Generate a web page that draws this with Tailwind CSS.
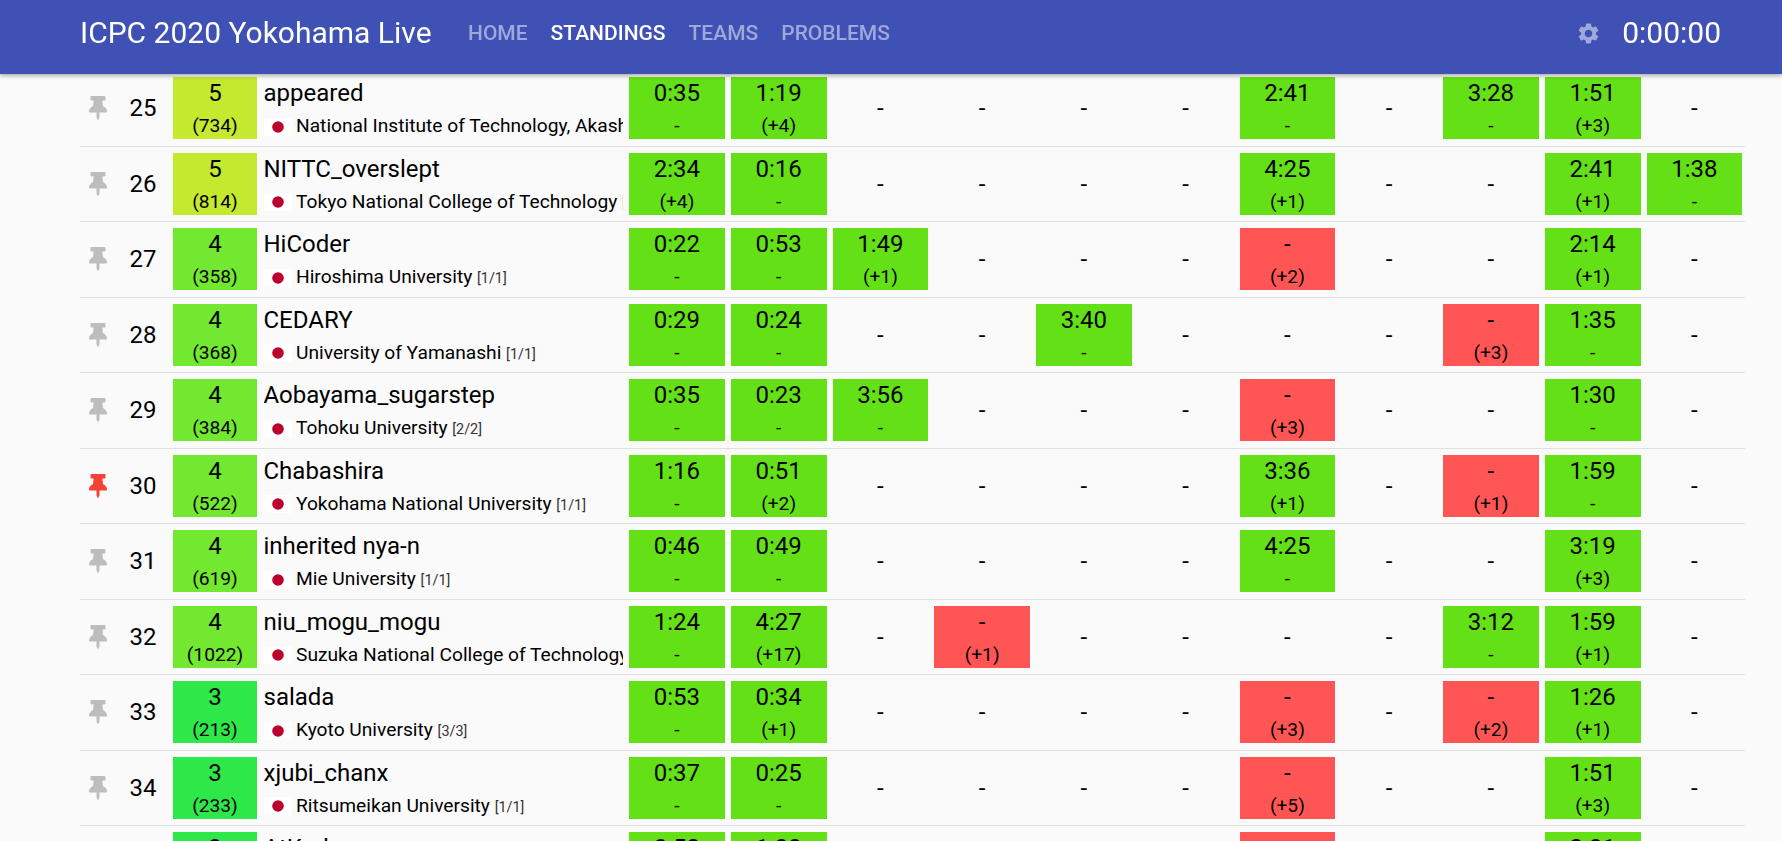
<!DOCTYPE html>
<html lang="en">
<head>
<meta charset="utf-8">
<title>ICPC 2020 Yokohama Live</title>
<script src="https://cdn.jsdelivr.net/npm/@tailwindcss/browser@4"></script>
</head>
<body class="h-[841px] overflow-hidden bg-[#fafafa] text-black font-['Roboto',sans-serif]">
<header class="fixed top-0 inset-x-0 z-10 h-[74px] bg-[#3f51b5] shadow-[0_2px_4px_rgba(0,0,0,0.3)] flex items-start pt-[15px] pl-[80px] pr-[61px] text-white">
  <div class="text-[30px] leading-[36px] w-[388px]">ICPC 2020 Yokohama Live</div>
  <nav class="flex gap-[23px] text-[21px] leading-[36px] font-medium text-[#9fa8da]">
    <a>HOME</a><a class="text-white">STANDINGS</a><a>TEAMS</a><a>PROBLEMS</a>
  </nav>
  <div class="ml-auto flex items-center gap-[21px]">
    <svg class="w-[25px] h-[25px] text-[#9fa8da]" viewBox="0 0 24 24" fill="currentColor"><path d="M19.14 12.94c.04-.3.06-.61.06-.94 0-.32-.02-.64-.07-.94l2.03-1.58a.49.49 0 0 0 .12-.61l-1.92-3.32a.488.488 0 0 0-.59-.22l-2.39.96c-.5-.38-1.03-.7-1.62-.94l-.36-2.54a.484.484 0 0 0-.48-.41h-3.84c-.24 0-.43.17-.47.41l-.36 2.54c-.59.24-1.13.57-1.62.94l-2.39-.96c-.22-.08-.47 0-.59.22L2.74 8.87c-.12.21-.08.47.12.61l2.03 1.58c-.05.3-.09.63-.09.94s.02.64.07.94l-2.03 1.58a.49.49 0 0 0-.12.61l1.92 3.32c.12.22.37.29.59.22l2.39-.96c.5.38 1.03.7 1.62.94l.36 2.54c.05.24.24.41.48.41h3.84c.24 0 .44-.17.47-.41l.36-2.54c.59-.24 1.13-.56 1.62-.94l2.39.96c.22.08.47 0 .59-.22l1.92-3.32c.12-.22.07-.47-.12-.61l-2.01-1.58zM12 15.6c-1.98 0-3.6-1.62-3.6-3.6s1.62-3.6 3.6-3.6 3.6 1.62 3.6 3.6-1.62 3.6-3.6 3.6z"/></svg>
    <div class="text-[30px] leading-[36px]">0:00:00</div>
  </div>
</header>

<main class="pt-[71px] pl-[80px]">

<section class="w-[1665px] h-[75.5px] border-b border-[#e0e0e0] grid grid-cols-[36px_54px_90px_366px_repeat(11,101.75px)] items-center text-center text-[24px]">
  <svg class="justify-self-center h-[24px] w-[18px] text-[#bdbdbd]" viewBox="0 0 384 512" fill="currentColor"><path d="M298.028 214.267L285.793 96H328c13.255 0 24-10.745 24-24V24c0-13.255-10.745-24-24-24H56C42.745 0 32 10.745 32 24v48c0 13.255 10.745 24 24 24h42.207L85.972 214.267C37.465 236.82 0 277.261 0 328c0 13.255 10.745 24 24 24h136v104.007c0 1.242.289 2.467.845 3.578l24 48c2.941 5.882 11.364 5.893 14.311 0l24-48a8.008 8.008 0 0 0 .845-3.578V352h136c13.255 0 24-10.745 24-24-.001-51.183-37.983-91.42-85.973-113.733z"/></svg>
  <div>25</div>
  <div class="mx-[3px] h-[62px] bg-[#c5e92f]"><p class="leading-[32px]">5</p><p class="text-[19.2px] leading-[34px]">(734)</p></div>
  <div class="ml-[3.5px] mr-[3px] text-left h-[62px] overflow-hidden whitespace-nowrap"><p class="leading-[32px]">appeared</p><div class="flex items-center h-[32px] mt-[1.5px] text-[19.2px] gap-[4.5px]"><svg class="w-[28px] h-[18px] shrink-0" viewBox="0 0 28 18"><rect width="28" height="18" fill="#fff"/><circle cx="14" cy="9" r="5.8" fill="#bc002d"/></svg><span>National Institute of Technology, Akashi College <span class="text-[14.4px] text-[#333]">[1/1]</span></span></div></div>
  <div class="mx-[3px] h-[62px] bg-[#64e016]"><p class="leading-[32px]">0:35</p><p class="text-[19.2px] leading-[34px]">-</p></div>
  <div class="mx-[3px] h-[62px] bg-[#64e016]"><p class="leading-[32px]">1:19</p><p class="text-[19.2px] leading-[34px]">(+4)</p></div>
  <div>-</div><div>-</div><div>-</div><div>-</div>
  <div class="mx-[3px] h-[62px] bg-[#64e016]"><p class="leading-[32px]">2:41</p><p class="text-[19.2px] leading-[34px]">-</p></div>
  <div>-</div>
  <div class="mx-[3px] h-[62px] bg-[#64e016]"><p class="leading-[32px]">3:28</p><p class="text-[19.2px] leading-[34px]">-</p></div>
  <div class="mx-[3px] h-[62px] bg-[#64e016]"><p class="leading-[32px]">1:51</p><p class="text-[19.2px] leading-[34px]">(+3)</p></div>
  <div>-</div>
</section>

<section class="w-[1665px] h-[75.5px] border-b border-[#e0e0e0] grid grid-cols-[36px_54px_90px_366px_repeat(11,101.75px)] items-center text-center text-[24px]">
  <svg class="justify-self-center h-[24px] w-[18px] text-[#bdbdbd]" viewBox="0 0 384 512" fill="currentColor"><path d="M298.028 214.267L285.793 96H328c13.255 0 24-10.745 24-24V24c0-13.255-10.745-24-24-24H56C42.745 0 32 10.745 32 24v48c0 13.255 10.745 24 24 24h42.207L85.972 214.267C37.465 236.82 0 277.261 0 328c0 13.255 10.745 24 24 24h136v104.007c0 1.242.289 2.467.845 3.578l24 48c2.941 5.882 11.364 5.893 14.311 0l24-48a8.008 8.008 0 0 0 .845-3.578V352h136c13.255 0 24-10.745 24-24-.001-51.183-37.983-91.42-85.973-113.733z"/></svg>
  <div>26</div>
  <div class="mx-[3px] h-[62px] bg-[#c5e92f]"><p class="leading-[32px]">5</p><p class="text-[19.2px] leading-[34px]">(814)</p></div>
  <div class="ml-[3.5px] mr-[3px] text-left h-[62px] overflow-hidden whitespace-nowrap"><p class="leading-[32px]">NITTC_overslept</p><div class="flex items-center h-[32px] mt-[1.5px] text-[19.2px] gap-[4.5px]"><svg class="w-[28px] h-[18px] shrink-0" viewBox="0 0 28 18"><rect width="28" height="18" fill="#fff"/><circle cx="14" cy="9" r="5.8" fill="#bc002d"/></svg><span>Tokyo National College of Technology <span class="text-[14.4px] text-[#333]">[1/1]</span></span></div></div>
  <div class="mx-[3px] h-[62px] bg-[#64e016]"><p class="leading-[32px]">2:34</p><p class="text-[19.2px] leading-[34px]">(+4)</p></div>
  <div class="mx-[3px] h-[62px] bg-[#64e016]"><p class="leading-[32px]">0:16</p><p class="text-[19.2px] leading-[34px]">-</p></div>
  <div>-</div><div>-</div><div>-</div><div>-</div>
  <div class="mx-[3px] h-[62px] bg-[#64e016]"><p class="leading-[32px]">4:25</p><p class="text-[19.2px] leading-[34px]">(+1)</p></div>
  <div>-</div><div>-</div>
  <div class="mx-[3px] h-[62px] bg-[#64e016]"><p class="leading-[32px]">2:41</p><p class="text-[19.2px] leading-[34px]">(+1)</p></div>
  <div class="mx-[3px] h-[62px] bg-[#64e016]"><p class="leading-[32px]">1:38</p><p class="text-[19.2px] leading-[34px]">-</p></div>
</section>

<section class="w-[1665px] h-[75.5px] border-b border-[#e0e0e0] grid grid-cols-[36px_54px_90px_366px_repeat(11,101.75px)] items-center text-center text-[24px]">
  <svg class="justify-self-center h-[24px] w-[18px] text-[#bdbdbd]" viewBox="0 0 384 512" fill="currentColor"><path d="M298.028 214.267L285.793 96H328c13.255 0 24-10.745 24-24V24c0-13.255-10.745-24-24-24H56C42.745 0 32 10.745 32 24v48c0 13.255 10.745 24 24 24h42.207L85.972 214.267C37.465 236.82 0 277.261 0 328c0 13.255 10.745 24 24 24h136v104.007c0 1.242.289 2.467.845 3.578l24 48c2.941 5.882 11.364 5.893 14.311 0l24-48a8.008 8.008 0 0 0 .845-3.578V352h136c13.255 0 24-10.745 24-24-.001-51.183-37.983-91.42-85.973-113.733z"/></svg>
  <div>27</div>
  <div class="mx-[3px] h-[62px] bg-[#72e830]"><p class="leading-[32px]">4</p><p class="text-[19.2px] leading-[34px]">(358)</p></div>
  <div class="ml-[3.5px] mr-[3px] text-left h-[62px] overflow-hidden whitespace-nowrap"><p class="leading-[32px]">HiCoder</p><div class="flex items-center h-[32px] mt-[1.5px] text-[19.2px] gap-[4.5px]"><svg class="w-[28px] h-[18px] shrink-0" viewBox="0 0 28 18"><rect width="28" height="18" fill="#fff"/><circle cx="14" cy="9" r="5.8" fill="#bc002d"/></svg><span>Hiroshima University <span class="text-[14.4px] text-[#333]">[1/1]</span></span></div></div>
  <div class="mx-[3px] h-[62px] bg-[#64e016]"><p class="leading-[32px]">0:22</p><p class="text-[19.2px] leading-[34px]">-</p></div>
  <div class="mx-[3px] h-[62px] bg-[#64e016]"><p class="leading-[32px]">0:53</p><p class="text-[19.2px] leading-[34px]">-</p></div>
  <div class="mx-[3px] h-[62px] bg-[#64e016]"><p class="leading-[32px]">1:49</p><p class="text-[19.2px] leading-[34px]">(+1)</p></div>
  <div>-</div><div>-</div><div>-</div>
  <div class="mx-[3px] h-[62px] bg-[#ff5555]"><p class="leading-[32px]">-</p><p class="text-[19.2px] leading-[34px]">(+2)</p></div>
  <div>-</div><div>-</div>
  <div class="mx-[3px] h-[62px] bg-[#64e016]"><p class="leading-[32px]">2:14</p><p class="text-[19.2px] leading-[34px]">(+1)</p></div>
  <div>-</div>
</section>

<section class="w-[1665px] h-[75.5px] border-b border-[#e0e0e0] grid grid-cols-[36px_54px_90px_366px_repeat(11,101.75px)] items-center text-center text-[24px]">
  <svg class="justify-self-center h-[24px] w-[18px] text-[#bdbdbd]" viewBox="0 0 384 512" fill="currentColor"><path d="M298.028 214.267L285.793 96H328c13.255 0 24-10.745 24-24V24c0-13.255-10.745-24-24-24H56C42.745 0 32 10.745 32 24v48c0 13.255 10.745 24 24 24h42.207L85.972 214.267C37.465 236.82 0 277.261 0 328c0 13.255 10.745 24 24 24h136v104.007c0 1.242.289 2.467.845 3.578l24 48c2.941 5.882 11.364 5.893 14.311 0l24-48a8.008 8.008 0 0 0 .845-3.578V352h136c13.255 0 24-10.745 24-24-.001-51.183-37.983-91.42-85.973-113.733z"/></svg>
  <div>28</div>
  <div class="mx-[3px] h-[62px] bg-[#72e830]"><p class="leading-[32px]">4</p><p class="text-[19.2px] leading-[34px]">(368)</p></div>
  <div class="ml-[3.5px] mr-[3px] text-left h-[62px] overflow-hidden whitespace-nowrap"><p class="leading-[32px]">CEDARY</p><div class="flex items-center h-[32px] mt-[1.5px] text-[19.2px] gap-[4.5px]"><svg class="w-[28px] h-[18px] shrink-0" viewBox="0 0 28 18"><rect width="28" height="18" fill="#fff"/><circle cx="14" cy="9" r="5.8" fill="#bc002d"/></svg><span>University of Yamanashi <span class="text-[14.4px] text-[#333]">[1/1]</span></span></div></div>
  <div class="mx-[3px] h-[62px] bg-[#64e016]"><p class="leading-[32px]">0:29</p><p class="text-[19.2px] leading-[34px]">-</p></div>
  <div class="mx-[3px] h-[62px] bg-[#64e016]"><p class="leading-[32px]">0:24</p><p class="text-[19.2px] leading-[34px]">-</p></div>
  <div>-</div><div>-</div>
  <div class="mx-[3px] h-[62px] bg-[#64e016]"><p class="leading-[32px]">3:40</p><p class="text-[19.2px] leading-[34px]">-</p></div>
  <div>-</div><div>-</div><div>-</div>
  <div class="mx-[3px] h-[62px] bg-[#ff5555]"><p class="leading-[32px]">-</p><p class="text-[19.2px] leading-[34px]">(+3)</p></div>
  <div class="mx-[3px] h-[62px] bg-[#64e016]"><p class="leading-[32px]">1:35</p><p class="text-[19.2px] leading-[34px]">-</p></div>
  <div>-</div>
</section>

<section class="w-[1665px] h-[75.5px] border-b border-[#e0e0e0] grid grid-cols-[36px_54px_90px_366px_repeat(11,101.75px)] items-center text-center text-[24px]">
  <svg class="justify-self-center h-[24px] w-[18px] text-[#bdbdbd]" viewBox="0 0 384 512" fill="currentColor"><path d="M298.028 214.267L285.793 96H328c13.255 0 24-10.745 24-24V24c0-13.255-10.745-24-24-24H56C42.745 0 32 10.745 32 24v48c0 13.255 10.745 24 24 24h42.207L85.972 214.267C37.465 236.82 0 277.261 0 328c0 13.255 10.745 24 24 24h136v104.007c0 1.242.289 2.467.845 3.578l24 48c2.941 5.882 11.364 5.893 14.311 0l24-48a8.008 8.008 0 0 0 .845-3.578V352h136c13.255 0 24-10.745 24-24-.001-51.183-37.983-91.42-85.973-113.733z"/></svg>
  <div>29</div>
  <div class="mx-[3px] h-[62px] bg-[#72e830]"><p class="leading-[32px]">4</p><p class="text-[19.2px] leading-[34px]">(384)</p></div>
  <div class="ml-[3.5px] mr-[3px] text-left h-[62px] overflow-hidden whitespace-nowrap"><p class="leading-[32px]">Aobayama_sugarstep</p><div class="flex items-center h-[32px] mt-[1.5px] text-[19.2px] gap-[4.5px]"><svg class="w-[28px] h-[18px] shrink-0" viewBox="0 0 28 18"><rect width="28" height="18" fill="#fff"/><circle cx="14" cy="9" r="5.8" fill="#bc002d"/></svg><span>Tohoku University <span class="text-[14.4px] text-[#333]">[2/2]</span></span></div></div>
  <div class="mx-[3px] h-[62px] bg-[#64e016]"><p class="leading-[32px]">0:35</p><p class="text-[19.2px] leading-[34px]">-</p></div>
  <div class="mx-[3px] h-[62px] bg-[#64e016]"><p class="leading-[32px]">0:23</p><p class="text-[19.2px] leading-[34px]">-</p></div>
  <div class="mx-[3px] h-[62px] bg-[#64e016]"><p class="leading-[32px]">3:56</p><p class="text-[19.2px] leading-[34px]">-</p></div>
  <div>-</div><div>-</div><div>-</div>
  <div class="mx-[3px] h-[62px] bg-[#ff5555]"><p class="leading-[32px]">-</p><p class="text-[19.2px] leading-[34px]">(+3)</p></div>
  <div>-</div><div>-</div>
  <div class="mx-[3px] h-[62px] bg-[#64e016]"><p class="leading-[32px]">1:30</p><p class="text-[19.2px] leading-[34px]">-</p></div>
  <div>-</div>
</section>

<section class="w-[1665px] h-[75.5px] border-b border-[#e0e0e0] grid grid-cols-[36px_54px_90px_366px_repeat(11,101.75px)] items-center text-center text-[24px]">
  <svg class="justify-self-center h-[24px] w-[18px] text-[#f44336]" viewBox="0 0 384 512" fill="currentColor"><path d="M298.028 214.267L285.793 96H328c13.255 0 24-10.745 24-24V24c0-13.255-10.745-24-24-24H56C42.745 0 32 10.745 32 24v48c0 13.255 10.745 24 24 24h42.207L85.972 214.267C37.465 236.82 0 277.261 0 328c0 13.255 10.745 24 24 24h136v104.007c0 1.242.289 2.467.845 3.578l24 48c2.941 5.882 11.364 5.893 14.311 0l24-48a8.008 8.008 0 0 0 .845-3.578V352h136c13.255 0 24-10.745 24-24-.001-51.183-37.983-91.42-85.973-113.733z"/></svg>
  <div>30</div>
  <div class="mx-[3px] h-[62px] bg-[#72e830]"><p class="leading-[32px]">4</p><p class="text-[19.2px] leading-[34px]">(522)</p></div>
  <div class="ml-[3.5px] mr-[3px] text-left h-[62px] overflow-hidden whitespace-nowrap"><p class="leading-[32px]">Chabashira</p><div class="flex items-center h-[32px] mt-[1.5px] text-[19.2px] gap-[4.5px]"><svg class="w-[28px] h-[18px] shrink-0" viewBox="0 0 28 18"><rect width="28" height="18" fill="#fff"/><circle cx="14" cy="9" r="5.8" fill="#bc002d"/></svg><span>Yokohama National University <span class="text-[14.4px] text-[#333]">[1/1]</span></span></div></div>
  <div class="mx-[3px] h-[62px] bg-[#64e016]"><p class="leading-[32px]">1:16</p><p class="text-[19.2px] leading-[34px]">-</p></div>
  <div class="mx-[3px] h-[62px] bg-[#64e016]"><p class="leading-[32px]">0:51</p><p class="text-[19.2px] leading-[34px]">(+2)</p></div>
  <div>-</div><div>-</div><div>-</div><div>-</div>
  <div class="mx-[3px] h-[62px] bg-[#64e016]"><p class="leading-[32px]">3:36</p><p class="text-[19.2px] leading-[34px]">(+1)</p></div>
  <div>-</div>
  <div class="mx-[3px] h-[62px] bg-[#ff5555]"><p class="leading-[32px]">-</p><p class="text-[19.2px] leading-[34px]">(+1)</p></div>
  <div class="mx-[3px] h-[62px] bg-[#64e016]"><p class="leading-[32px]">1:59</p><p class="text-[19.2px] leading-[34px]">-</p></div>
  <div>-</div>
</section>

<section class="w-[1665px] h-[75.5px] border-b border-[#e0e0e0] grid grid-cols-[36px_54px_90px_366px_repeat(11,101.75px)] items-center text-center text-[24px]">
  <svg class="justify-self-center h-[24px] w-[18px] text-[#bdbdbd]" viewBox="0 0 384 512" fill="currentColor"><path d="M298.028 214.267L285.793 96H328c13.255 0 24-10.745 24-24V24c0-13.255-10.745-24-24-24H56C42.745 0 32 10.745 32 24v48c0 13.255 10.745 24 24 24h42.207L85.972 214.267C37.465 236.82 0 277.261 0 328c0 13.255 10.745 24 24 24h136v104.007c0 1.242.289 2.467.845 3.578l24 48c2.941 5.882 11.364 5.893 14.311 0l24-48a8.008 8.008 0 0 0 .845-3.578V352h136c13.255 0 24-10.745 24-24-.001-51.183-37.983-91.42-85.973-113.733z"/></svg>
  <div>31</div>
  <div class="mx-[3px] h-[62px] bg-[#72e830]"><p class="leading-[32px]">4</p><p class="text-[19.2px] leading-[34px]">(619)</p></div>
  <div class="ml-[3.5px] mr-[3px] text-left h-[62px] overflow-hidden whitespace-nowrap"><p class="leading-[32px]">inherited nya-n</p><div class="flex items-center h-[32px] mt-[1.5px] text-[19.2px] gap-[4.5px]"><svg class="w-[28px] h-[18px] shrink-0" viewBox="0 0 28 18"><rect width="28" height="18" fill="#fff"/><circle cx="14" cy="9" r="5.8" fill="#bc002d"/></svg><span>Mie University <span class="text-[14.4px] text-[#333]">[1/1]</span></span></div></div>
  <div class="mx-[3px] h-[62px] bg-[#64e016]"><p class="leading-[32px]">0:46</p><p class="text-[19.2px] leading-[34px]">-</p></div>
  <div class="mx-[3px] h-[62px] bg-[#64e016]"><p class="leading-[32px]">0:49</p><p class="text-[19.2px] leading-[34px]">-</p></div>
  <div>-</div><div>-</div><div>-</div><div>-</div>
  <div class="mx-[3px] h-[62px] bg-[#64e016]"><p class="leading-[32px]">4:25</p><p class="text-[19.2px] leading-[34px]">-</p></div>
  <div>-</div><div>-</div>
  <div class="mx-[3px] h-[62px] bg-[#64e016]"><p class="leading-[32px]">3:19</p><p class="text-[19.2px] leading-[34px]">(+3)</p></div>
  <div>-</div>
</section>

<section class="w-[1665px] h-[75.5px] border-b border-[#e0e0e0] grid grid-cols-[36px_54px_90px_366px_repeat(11,101.75px)] items-center text-center text-[24px]">
  <svg class="justify-self-center h-[24px] w-[18px] text-[#bdbdbd]" viewBox="0 0 384 512" fill="currentColor"><path d="M298.028 214.267L285.793 96H328c13.255 0 24-10.745 24-24V24c0-13.255-10.745-24-24-24H56C42.745 0 32 10.745 32 24v48c0 13.255 10.745 24 24 24h42.207L85.972 214.267C37.465 236.82 0 277.261 0 328c0 13.255 10.745 24 24 24h136v104.007c0 1.242.289 2.467.845 3.578l24 48c2.941 5.882 11.364 5.893 14.311 0l24-48a8.008 8.008 0 0 0 .845-3.578V352h136c13.255 0 24-10.745 24-24-.001-51.183-37.983-91.42-85.973-113.733z"/></svg>
  <div>32</div>
  <div class="mx-[3px] h-[62px] bg-[#72e830]"><p class="leading-[32px]">4</p><p class="text-[19.2px] leading-[34px]">(1022)</p></div>
  <div class="ml-[3.5px] mr-[3px] text-left h-[62px] overflow-hidden whitespace-nowrap"><p class="leading-[32px]">niu_mogu_mogu</p><div class="flex items-center h-[32px] mt-[1.5px] text-[19.2px] gap-[4.5px]"><svg class="w-[28px] h-[18px] shrink-0" viewBox="0 0 28 18"><rect width="28" height="18" fill="#fff"/><circle cx="14" cy="9" r="5.8" fill="#bc002d"/></svg><span>Suzuka National College of Technology <span class="text-[14.4px] text-[#333]">[1/1]</span></span></div></div>
  <div class="mx-[3px] h-[62px] bg-[#64e016]"><p class="leading-[32px]">1:24</p><p class="text-[19.2px] leading-[34px]">-</p></div>
  <div class="mx-[3px] h-[62px] bg-[#64e016]"><p class="leading-[32px]">4:27</p><p class="text-[19.2px] leading-[34px]">(+17)</p></div>
  <div>-</div>
  <div class="mx-[3px] h-[62px] bg-[#ff5555]"><p class="leading-[32px]">-</p><p class="text-[19.2px] leading-[34px]">(+1)</p></div>
  <div>-</div><div>-</div><div>-</div><div>-</div>
  <div class="mx-[3px] h-[62px] bg-[#64e016]"><p class="leading-[32px]">3:12</p><p class="text-[19.2px] leading-[34px]">-</p></div>
  <div class="mx-[3px] h-[62px] bg-[#64e016]"><p class="leading-[32px]">1:59</p><p class="text-[19.2px] leading-[34px]">(+1)</p></div>
  <div>-</div>
</section>

<section class="w-[1665px] h-[75.5px] border-b border-[#e0e0e0] grid grid-cols-[36px_54px_90px_366px_repeat(11,101.75px)] items-center text-center text-[24px]">
  <svg class="justify-self-center h-[24px] w-[18px] text-[#bdbdbd]" viewBox="0 0 384 512" fill="currentColor"><path d="M298.028 214.267L285.793 96H328c13.255 0 24-10.745 24-24V24c0-13.255-10.745-24-24-24H56C42.745 0 32 10.745 32 24v48c0 13.255 10.745 24 24 24h42.207L85.972 214.267C37.465 236.82 0 277.261 0 328c0 13.255 10.745 24 24 24h136v104.007c0 1.242.289 2.467.845 3.578l24 48c2.941 5.882 11.364 5.893 14.311 0l24-48a8.008 8.008 0 0 0 .845-3.578V352h136c13.255 0 24-10.745 24-24-.001-51.183-37.983-91.42-85.973-113.733z"/></svg>
  <div>33</div>
  <div class="mx-[3px] h-[62px] bg-[#2ee84a]"><p class="leading-[32px]">3</p><p class="text-[19.2px] leading-[34px]">(213)</p></div>
  <div class="ml-[3.5px] mr-[3px] text-left h-[62px] overflow-hidden whitespace-nowrap"><p class="leading-[32px]">salada</p><div class="flex items-center h-[32px] mt-[1.5px] text-[19.2px] gap-[4.5px]"><svg class="w-[28px] h-[18px] shrink-0" viewBox="0 0 28 18"><rect width="28" height="18" fill="#fff"/><circle cx="14" cy="9" r="5.8" fill="#bc002d"/></svg><span>Kyoto University <span class="text-[14.4px] text-[#333]">[3/3]</span></span></div></div>
  <div class="mx-[3px] h-[62px] bg-[#64e016]"><p class="leading-[32px]">0:53</p><p class="text-[19.2px] leading-[34px]">-</p></div>
  <div class="mx-[3px] h-[62px] bg-[#64e016]"><p class="leading-[32px]">0:34</p><p class="text-[19.2px] leading-[34px]">(+1)</p></div>
  <div>-</div><div>-</div><div>-</div><div>-</div>
  <div class="mx-[3px] h-[62px] bg-[#ff5555]"><p class="leading-[32px]">-</p><p class="text-[19.2px] leading-[34px]">(+3)</p></div>
  <div>-</div>
  <div class="mx-[3px] h-[62px] bg-[#ff5555]"><p class="leading-[32px]">-</p><p class="text-[19.2px] leading-[34px]">(+2)</p></div>
  <div class="mx-[3px] h-[62px] bg-[#64e016]"><p class="leading-[32px]">1:26</p><p class="text-[19.2px] leading-[34px]">(+1)</p></div>
  <div>-</div>
</section>

<section class="w-[1665px] h-[75.5px] border-b border-[#e0e0e0] grid grid-cols-[36px_54px_90px_366px_repeat(11,101.75px)] items-center text-center text-[24px]">
  <svg class="justify-self-center h-[24px] w-[18px] text-[#bdbdbd]" viewBox="0 0 384 512" fill="currentColor"><path d="M298.028 214.267L285.793 96H328c13.255 0 24-10.745 24-24V24c0-13.255-10.745-24-24-24H56C42.745 0 32 10.745 32 24v48c0 13.255 10.745 24 24 24h42.207L85.972 214.267C37.465 236.82 0 277.261 0 328c0 13.255 10.745 24 24 24h136v104.007c0 1.242.289 2.467.845 3.578l24 48c2.941 5.882 11.364 5.893 14.311 0l24-48a8.008 8.008 0 0 0 .845-3.578V352h136c13.255 0 24-10.745 24-24-.001-51.183-37.983-91.42-85.973-113.733z"/></svg>
  <div>34</div>
  <div class="mx-[3px] h-[62px] bg-[#2ee84a]"><p class="leading-[32px]">3</p><p class="text-[19.2px] leading-[34px]">(233)</p></div>
  <div class="ml-[3.5px] mr-[3px] text-left h-[62px] overflow-hidden whitespace-nowrap"><p class="leading-[32px]">xjubi_chanx</p><div class="flex items-center h-[32px] mt-[1.5px] text-[19.2px] gap-[4.5px]"><svg class="w-[28px] h-[18px] shrink-0" viewBox="0 0 28 18"><rect width="28" height="18" fill="#fff"/><circle cx="14" cy="9" r="5.8" fill="#bc002d"/></svg><span>Ritsumeikan University <span class="text-[14.4px] text-[#333]">[1/1]</span></span></div></div>
  <div class="mx-[3px] h-[62px] bg-[#64e016]"><p class="leading-[32px]">0:37</p><p class="text-[19.2px] leading-[34px]">-</p></div>
  <div class="mx-[3px] h-[62px] bg-[#64e016]"><p class="leading-[32px]">0:25</p><p class="text-[19.2px] leading-[34px]">-</p></div>
  <div>-</div><div>-</div><div>-</div><div>-</div>
  <div class="mx-[3px] h-[62px] bg-[#ff5555]"><p class="leading-[32px]">-</p><p class="text-[19.2px] leading-[34px]">(+5)</p></div>
  <div>-</div><div>-</div>
  <div class="mx-[3px] h-[62px] bg-[#64e016]"><p class="leading-[32px]">1:51</p><p class="text-[19.2px] leading-[34px]">(+3)</p></div>
  <div>-</div>
</section>

<section class="w-[1665px] h-[75.5px] border-b border-[#e0e0e0] grid grid-cols-[36px_54px_90px_366px_repeat(11,101.75px)] items-center text-center text-[24px]">
  <svg class="justify-self-center h-[24px] w-[18px] text-[#bdbdbd]" viewBox="0 0 384 512" fill="currentColor"><path d="M298.028 214.267L285.793 96H328c13.255 0 24-10.745 24-24V24c0-13.255-10.745-24-24-24H56C42.745 0 32 10.745 32 24v48c0 13.255 10.745 24 24 24h42.207L85.972 214.267C37.465 236.82 0 277.261 0 328c0 13.255 10.745 24 24 24h136v104.007c0 1.242.289 2.467.845 3.578l24 48c2.941 5.882 11.364 5.893 14.311 0l24-48a8.008 8.008 0 0 0 .845-3.578V352h136c13.255 0 24-10.745 24-24-.001-51.183-37.983-91.42-85.973-113.733z"/></svg>
  <div>35</div>
  <div class="mx-[3px] h-[62px] bg-[#2ee84a]"><p class="leading-[32px]">3</p><p class="text-[19.2px] leading-[34px]">(295)</p></div>
  <div class="ml-[3.5px] mr-[3px] text-left h-[62px] overflow-hidden whitespace-nowrap"><p class="leading-[32px]">AtKoder</p></div>
  <div class="mx-[3px] h-[62px] bg-[#64e016]"><p class="leading-[32px]">0:52</p><p class="text-[19.2px] leading-[34px]">-</p></div>
  <div class="mx-[3px] h-[62px] bg-[#64e016]"><p class="leading-[32px]">1:33</p><p class="text-[19.2px] leading-[34px]">-</p></div>
  <div>-</div><div>-</div><div>-</div><div>-</div>
  <div class="mx-[3px] h-[62px] bg-[#ff5555]"><p class="leading-[32px]">-</p><p class="text-[19.2px] leading-[34px]">(+1)</p></div>
  <div>-</div><div>-</div>
  <div class="mx-[3px] h-[62px] bg-[#64e016]"><p class="leading-[32px]">2:01</p><p class="text-[19.2px] leading-[34px]">-</p></div>
  <div>-</div>
</section>

</main>
</body>
</html>
